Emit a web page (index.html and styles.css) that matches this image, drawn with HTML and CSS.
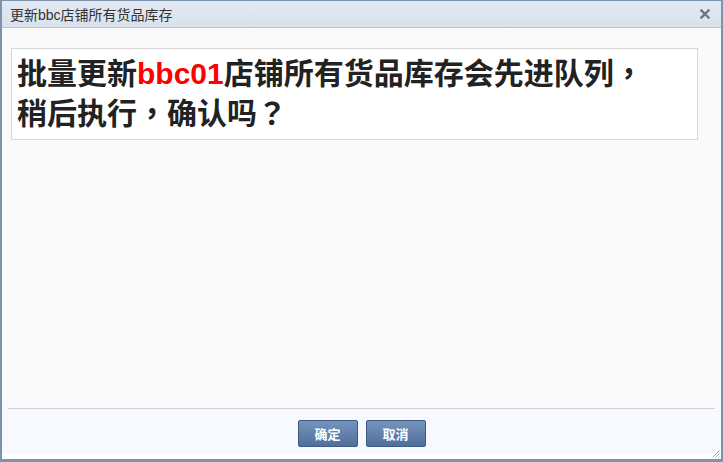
FILE: index.html
```html
<!DOCTYPE html>
<html lang="zh-CN">
<head>
<meta charset="utf-8">
<title>更新bbc店铺所有货品库存</title>
<link rel="stylesheet" href="styles.css">
</head>
<body>
<div class="dialog">
  <div class="dialog-header">
    <span class="dialog-title">更新bbc店铺所有货品库存</span>
    <span class="dialog-close" aria-label="关闭">
      <svg width="10" height="10" viewBox="0 0 10 10"><path d="M1.5 1.5 L8.5 8.5 M8.5 1.5 L1.5 8.5" stroke="#6b7686" stroke-width="2.4" stroke-linecap="square"/></svg>
    </span>
  </div>
  <div class="dialog-body">
    <div class="message">批量更新<span class="shop">bbc01</span>店铺所有货品库存会先进队列<span lang="zh-TW">，</span><br>稍后执行<span lang="zh-TW">，</span>确认吗<span lang="zh-TW">？</span></div>
  </div>
  <div class="dialog-footer">
    <div class="separator"></div>
    <div class="buttons">
      <button class="btn">确定</button>
      <button class="btn">取消</button>
    </div>
  </div>
  <div class="dialog-bottom"></div>
  <svg class="grip" width="8" height="8" viewBox="0 0 8 8"><path d="M7.5 0.5 L0.5 7.5 M7.5 3.5 L3.5 7.5 M7.5 6.5 L6.5 7.5" stroke="#9aa6b8" stroke-width="1"/></svg>
</div>
</body>
</html>
```

FILE: styles.css
```css
html, body {
  margin: 0;
  padding: 0;
  background: #ffffff;
}

.dialog {
  position: relative;
  width: 723px;
  height: 462px;
  box-sizing: border-box;
  border-style: solid;
  border-color: #7d93ad;
  border-width: 1px 2px 3px 2px;
  display: flex;
  flex-direction: column;
  font-family: "Liberation Sans", "Noto Sans CJK SC", sans-serif;
  background: #ffffff;
}

.dialog-header {
  height: 26px;
  flex: none;
  border-bottom: 1px solid #b4c2d3;
  background: linear-gradient(#e4eaf2, #d9e1eb);
  display: flex;
  align-items: center;
  justify-content: space-between;
  padding: 0 11px 0 8px;
}

.dialog-title {
  font-size: 14px;
  color: #333333;
}

.dialog-close {
  display: flex;
  width: 10px;
  height: 10px;
}

.dialog-body {
  height: 374px;
  flex: none;
  box-sizing: border-box;
  background: #fafafa;
  padding: 20px 23px 0 9px;
}

.message {
  background: #ffffff;
  border: 1px solid #d6d6d6;
  padding: 5px 5px;
  font-size: 30px;
  line-height: 40px;
  font-weight: bold;
  color: #222222;
}

.shop {
  color: #ff0000;
}

.dialog-footer {
  height: 52px;
  flex: none;
  box-sizing: border-box;
  background: #f8f9fe;
  padding-top: 6px;
}

.separator {
  height: 1px;
  margin: 0 6px;
  background: #d2d2d2;
}

.buttons {
  display: flex;
  justify-content: center;
  gap: 8px;
  padding-top: 11px;
}

.btn {
  width: 60px;
  height: 27px;
  box-sizing: border-box;
  border: 1px solid #3e5a80;
  border-radius: 2px;
  background: linear-gradient(#7594bd, #4f6e9b);
  color: #ffffff;
  font-family: "Liberation Sans", "Noto Sans CJK SC", sans-serif;
  font-size: 13px;
  font-weight: bold;
  padding: 0;
}

.dialog-bottom {
  flex: 1;
  min-height: 0;
  background: #ffffff;
}

.grip {
  position: absolute;
  right: 1px;
  bottom: 1px;
  display: block;
}
```
